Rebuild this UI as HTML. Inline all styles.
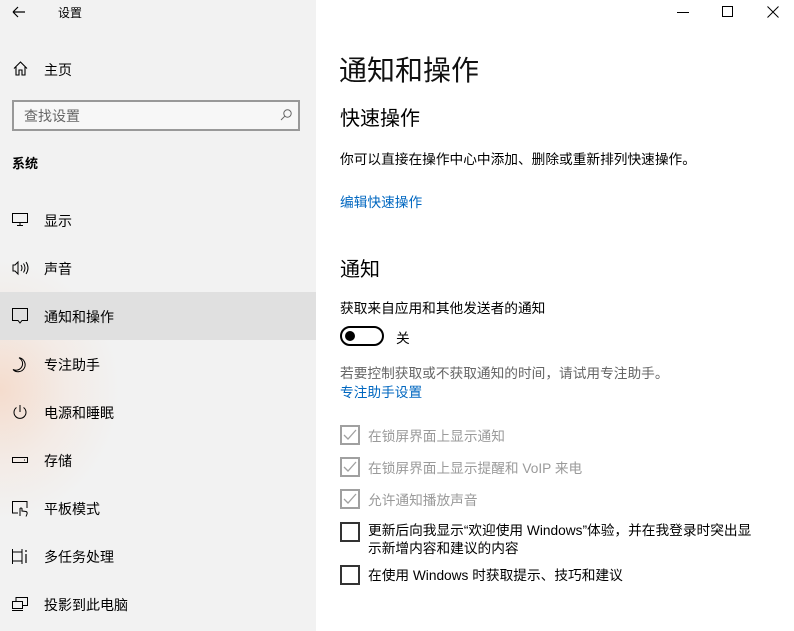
<!DOCTYPE html>
<html><head><meta charset="utf-8"><style>
*{margin:0;padding:0;box-sizing:border-box}
body{width:794px;height:631px;overflow:hidden;background:#fff;font-family:"Liberation Sans","Noto Sans CJK SC",sans-serif;color:#000;position:relative}
.side{position:absolute;left:0;top:0;width:316px;height:631px;background:radial-gradient(ellipse 120px 130px at 0px 390px,#f4dccd 0%,#f3ebe6 55%,rgba(242,242,242,0) 100%),#f2f2f2}
.a{position:absolute;white-space:nowrap}
.t{font-size:14px}
.sel{position:absolute;left:0;top:292px;width:316px;height:48px;background:#e0e0e0}
svg{position:absolute;overflow:visible}
.cb{position:absolute;left:340px;width:20px;height:20px;border:2px solid #333}
.cb.d{border-color:#a0a0a0}
.g{color:#9a9a9a}
.blue{color:#0067c0}
</style></head><body>
<div class="side"></div>
<div class="sel"></div>
<svg style="left:12px;top:6px" width="14" height="12"><path d="M1 6H13M1 6L6 1M1 6L6 11" stroke="#000" stroke-width="1.2" fill="none"/></svg>
<div class="a" style="left:58px;top:4px;font-size:12px">设置</div>
<svg style="left:13px;top:61px" width="15" height="15"><path d="M1 7.5L7.5 1L14 7.5M3 6V14H6V9H9V14H12V6" stroke="#000" stroke-width="1.1" fill="none"/></svg>
<div class="a t" style="left:44px;top:60px">主页</div>
<div class="a" style="left:12px;top:100px;width:288px;height:31px;border:2px solid #999;background:#f7f7f7"></div>
<div class="a t" style="left:24px;top:106px;color:#666">查找设置</div>
<svg style="left:280px;top:109px" width="12" height="12"><circle cx="7.5" cy="4.5" r="3.7" stroke="#666" fill="none"/><path d="M4.8 7.2L1 11" stroke="#666"/></svg>
<div class="a" style="left:12px;top:153px;font-size:13px;font-weight:bold">系统</div>
<svg style="left:12px;top:213px" width="16" height="14"><rect x="0.5" y="0.5" width="15" height="9" stroke="#000" fill="none"/><path d="M8 10V12M5 12.5H11" stroke="#000"/></svg>
<div class="a t" style="left:44px;top:211px">显示</div>
<svg style="left:12px;top:261px" width="18" height="14"><path d="M1 4H3L6 1V13L3 10H1Z" stroke="#000" fill="none"/><path d="M9 4Q11 7 9 10M11.5 2.5Q14.5 7 11.5 11.5M14 1Q18 7 14 13" stroke="#000" fill="none"/></svg>
<div class="a t" style="left:44px;top:259px">声音</div>
<svg style="left:12px;top:308px" width="16" height="16"><path d="M0.5 0.5H15.5V12.5H10L8 15L6 12.5H0.5Z" stroke="#000" fill="none"/></svg>
<div class="a t" style="left:44px;top:307px">通知和操作</div>
<svg style="left:12px;top:357px" width="16" height="16"><path d="M7 0.8A7 7 0 1 1 1 12.5A6.3 6.3 0 0 0 7 0.8Z" stroke="#000" fill="none"/></svg>
<div class="a t" style="left:44px;top:355px">专注助手</div>
<svg style="left:12px;top:404px" width="16" height="16"><path d="M4.5 3.5A6 6 0 1 0 11.5 3.5" stroke="#000" fill="none"/><path d="M8 1V8" stroke="#000"/></svg>
<div class="a t" style="left:44px;top:403px">电源和睡眠</div>
<svg style="left:12px;top:457px" width="16" height="8"><rect x="0.5" y="0.5" width="15" height="5" stroke="#000" fill="none"/><path d="M12 3H13" stroke="#000"/></svg>
<div class="a t" style="left:44px;top:451px">存储</div>
<svg style="left:12px;top:501px" width="17" height="16"><path d="M6 12H0.5V0.5H15V7" stroke="#000" fill="none"/><path d="M8 15V7.5Q9 6.5 10 7.5V10L14 10.5Q15.5 11 15 13L14 15.5" stroke="#000" fill="none"/></svg>
<div class="a t" style="left:44px;top:499px">平板模式</div>
<svg style="left:12px;top:549px" width="17" height="15"><path d="M0.5 0V3H10V0M0.5 15V12H10V15M0.5 3V12M10 3V12" stroke="#000" fill="none"/><path d="M14 1V3M14 5V14" stroke="#000" stroke-width="1.2"/></svg>
<div class="a t" style="left:44px;top:547px">多任务处理</div>
<svg style="left:12px;top:597px" width="16" height="14"><path d="M4 4V0.5H15.5V8.5H11" stroke="#000" fill="none"/><rect x="0.5" y="4.5" width="10" height="7" stroke="#000" fill="none"/><path d="M0 13.5H11" stroke="#000"/></svg>
<div class="a t" style="left:44px;top:595px">投影到此电脑</div>

<svg style="left:677px;top:12px" width="12" height="1"><path d="M0 0.5H12" stroke="#000"/></svg>
<svg style="left:722px;top:6px" width="11" height="11"><rect x="0.5" y="0.5" width="10" height="10" stroke="#000" fill="none"/></svg>
<svg style="left:767px;top:6px" width="12" height="12"><path d="M0.5 0.5L11.5 11.5M11.5 0.5L0.5 11.5" stroke="#000"/></svg>

<div class="a" style="left:339px;top:49px;font-size:28px;color:#111">通知和操作</div>
<div class="a" style="left:340px;top:102px;font-size:20px">快速操作</div>
<div class="a" style="left:340px;top:148px;font-size:13.7px">你可以直接在操作中心中添加、删除或重新排列快速操作。</div>
<div class="a blue" style="left:340px;top:191px;font-size:13.7px">编辑快速操作</div>
<div class="a" style="left:340px;top:253px;font-size:20px">通知</div>
<div class="a" style="left:340px;top:297px;font-size:13.7px">获取来自应用和其他发送者的通知</div>
<div class="a" style="left:340px;top:326px;width:44px;height:20px;border:2px solid #000;border-radius:10px"></div>
<div class="a" style="left:345px;top:331px;width:10px;height:10px;border-radius:5px;background:#000"></div>
<div class="a" style="left:396px;top:327px;font-size:13.7px">关</div>
<div class="a" style="left:340px;top:362px;font-size:13.7px;color:#666">若要控制获取或不获取通知的时间，请试用专注助手。</div>
<div class="a blue" style="left:340px;top:381px;font-size:13.7px">专注助手设置</div>
<div class="cb d" style="top:425px"></div>
<svg style="left:343px;top:429px" width="14" height="12"><path d="M1 6L5 10L13 1" stroke="#a0a0a0" stroke-width="1.3" fill="none"/></svg>
<div class="a g" style="left:368px;top:425px;font-size:13.7px">在锁屏界面上显示通知</div>
<div class="cb d" style="top:457px"></div>
<svg style="left:343px;top:461px" width="14" height="12"><path d="M1 6L5 10L13 1" stroke="#a0a0a0" stroke-width="1.3" fill="none"/></svg>
<div class="a g" style="left:368px;top:457px;font-size:13.7px">在锁屏界面上显示提醒和 VoIP 来电</div>
<div class="cb d" style="top:489px"></div>
<svg style="left:343px;top:493px" width="14" height="12"><path d="M1 6L5 10L13 1" stroke="#a0a0a0" stroke-width="1.3" fill="none"/></svg>
<div class="a g" style="left:368px;top:489px;font-size:13.7px">允许通知播放声音</div>
<div class="cb" style="top:522px"></div>
<div class="a" style="left:368px;top:522px;font-size:13.7px;line-height:18px">更新后向我显示“欢迎使用 Windows”体验，并在我登录时突出显<br>示新增内容和建议的内容</div>
<div class="cb" style="top:565px"></div>
<div class="a" style="left:368px;top:564px;font-size:13.7px">在使用 Windows 时获取提示、技巧和建议</div>
</body></html>
